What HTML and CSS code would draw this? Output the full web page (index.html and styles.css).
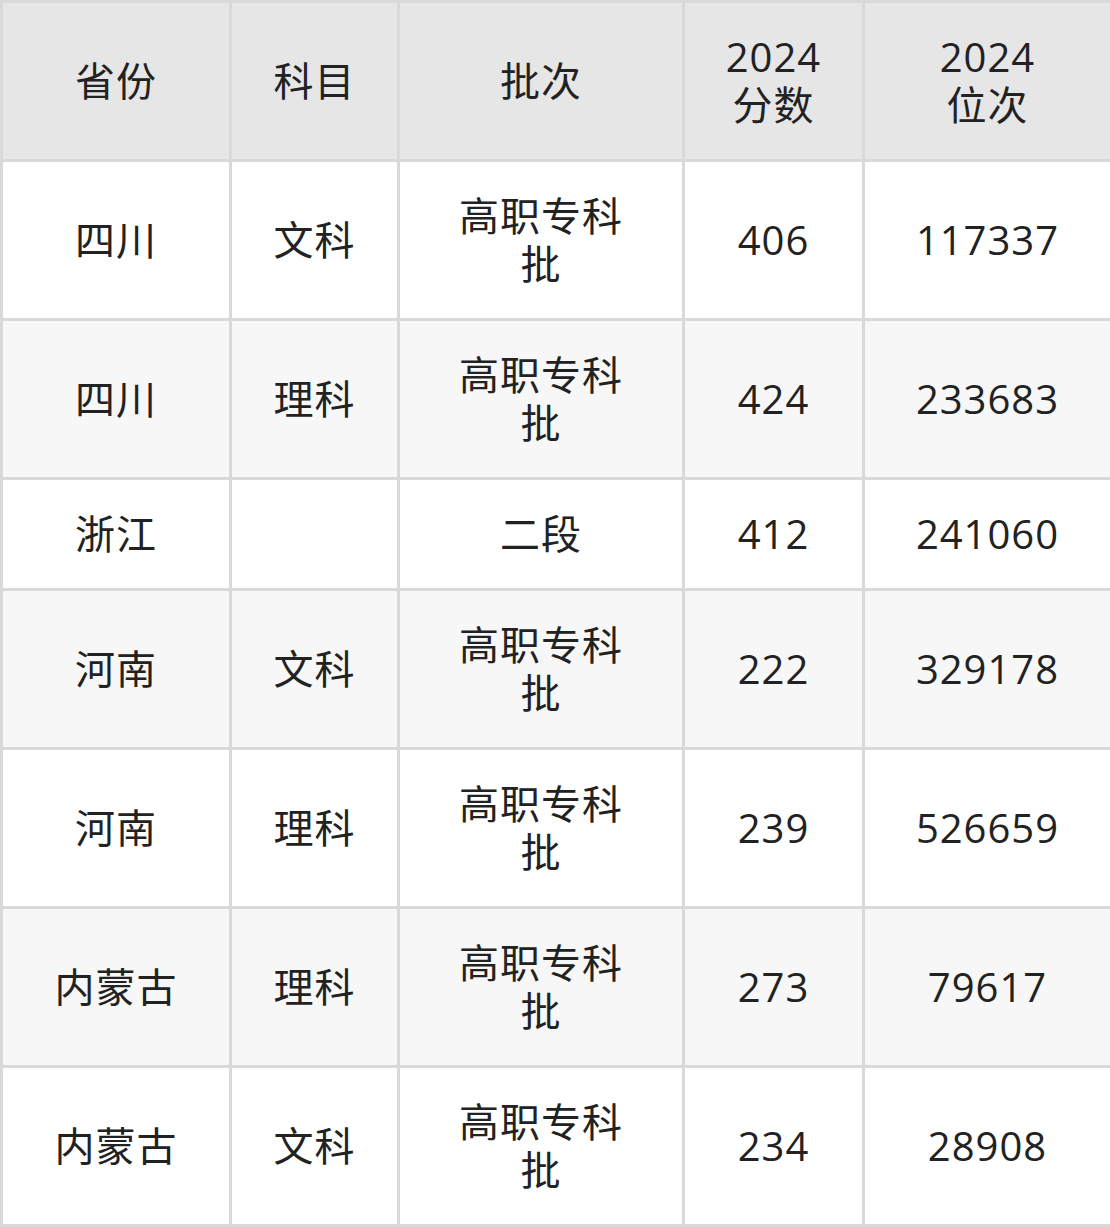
FILE: index.html
```html
<!DOCTYPE html>
<html lang="zh">
<head>
<meta charset="utf-8">
<link rel="stylesheet" href="styles.css">
</head>
<body>
<table class="score-table">
  <colgroup>
    <col class="c1"><col class="c2"><col class="c3"><col class="c4"><col class="c5">
  </colgroup>
  <thead>
    <tr><th>省份</th><th>科目</th><th>批次</th><th>2024<br>分数</th><th>2024<br>位次</th></tr>
  </thead>
  <tbody>
    <tr><td>四川</td><td>文科</td><td>高职专科<br>批</td><td>406</td><td>117337</td></tr>
    <tr class="alt"><td>四川</td><td>理科</td><td>高职专科<br>批</td><td>424</td><td>233683</td></tr>
    <tr><td>浙江</td><td></td><td>二段</td><td>412</td><td>241060</td></tr>
    <tr class="alt"><td>河南</td><td>文科</td><td>高职专科<br>批</td><td>222</td><td>329178</td></tr>
    <tr><td>河南</td><td>理科</td><td>高职专科<br>批</td><td>239</td><td>526659</td></tr>
    <tr class="alt"><td>内蒙古</td><td>理科</td><td>高职专科<br>批</td><td>273</td><td>79617</td></tr>
    <tr><td>内蒙古</td><td>文科</td><td>高职专科<br>批</td><td>234</td><td>28908</td></tr>
  </tbody>
</table>
</body>
</html>
```

FILE: styles.css
```css
html, body {
  margin: 0;
  padding: 0;
  background: #ffffff;
}
.score-table {
  border-collapse: collapse;
  table-layout: fixed;
  width: 1110px;
  font-family: "Open Sans", "Noto Sans CJK SC", sans-serif;
  font-size: 40px;
  line-height: 48px;
  color: #222222;
}
.c1 { width: 229px; }
.c2 { width: 168px; }
.c3 { width: 285px; }
.c4 { width: 180px; }
.c5 { width: 248px; }
.score-table th,
.score-table td {
  border: 3px solid #d9d9d9;
  padding: 30px 0;
  text-align: center;
  vertical-align: middle;
  font-weight: normal;
  letter-spacing: 1px;
}
.score-table thead th {
  background: #e6e6e6;
}
.score-table tr.alt td {
  background: #f7f7f7;
}
```
